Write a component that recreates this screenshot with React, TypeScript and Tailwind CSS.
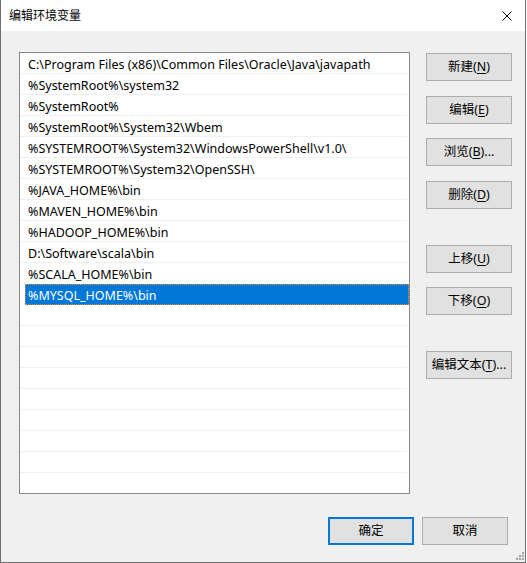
import { ReactNode } from "react";

const paths = [
  "C:\\Program Files (x86)\\Common Files\\Oracle\\Java\\javapath",
  "%SystemRoot%\\system32",
  "%SystemRoot%",
  "%SystemRoot%\\System32\\Wbem",
  "%SYSTEMROOT%\\System32\\WindowsPowerShell\\v1.0\\",
  "%SYSTEMROOT%\\System32\\OpenSSH\\",
  "%JAVA_HOME%\\bin",
  "%MAVEN_HOME%\\bin",
  "%HADOOP_HOME%\\bin",
  "D:\\Software\\scala\\bin",
  "%SCALA_HOME%\\bin",
  "%MYSQL_HOME%\\bin",
];

const selected = 11;
const totalRows = 21;

const font = "font-['Noto_Sans','Noto_Sans_CJK_SC',sans-serif]";

// label with an underlined access key, e.g. 新建(N)
const Key = ({ text, k, tail = "" }: { text: string; k: string; tail?: string }) => (
  <>
    {text}(<span className="underline underline-offset-2">{k}</span>){tail}
  </>
);

const Btn = ({
  children,
  className = "",
  primary = false,
}: {
  children: ReactNode;
  className?: string;
  primary?: boolean;
}) => (
  <button
    className={`w-[86px] h-[28px] bg-[#e1e1e1] text-[12.5px] text-black flex items-center justify-center ${
      primary ? "border-2 border-[#0078d7]" : "border border-[#adadad]"
    } ${className}`}
  >
    {children}
  </button>
);

export default function App() {
  const rows = Array.from({ length: totalRows }, (_, i) => paths[i] ?? "");

  return (
    <div className={`w-[526px] h-[563px] flex flex-col border-l border-r border-b border-[#707070] ${font}`}>
      {/* title bar */}
      <div className="h-[31px] bg-white flex items-center pl-[8px] shrink-0">
        <span className="text-[12px] text-black">编辑环境变量</span>
        <svg className="ml-auto mr-[13px]" width="10" height="10" viewBox="0 0 10 10">
          <path d="M0.5 0.5L9.5 9.5M9.5 0.5L0.5 9.5" stroke="#000" strokeWidth="1" />
        </svg>
      </div>

      <div className="flex-1 bg-[#f0f0f0] flex flex-col relative">
        <div className="flex pt-[21px] pl-[18px]">
          {/* path list */}
          <div className="w-[391px] h-[442px] bg-white border border-[#828790] overflow-hidden">
            {rows.map((p, i) =>
              i === selected ? (
                <div key={i} className="h-[21px] pl-[5px]">
                  <div className="h-[21px] bg-[#0078d7] border border-dotted border-[#ff8728] pl-[2px] text-[12.5px] leading-[21px] text-white whitespace-nowrap">
                    {p}
                  </div>
                </div>
              ) : (
                <div
                  key={i}
                  className={`h-[21px] mr-[2px] pl-[8px] text-[12.5px] leading-[24px] text-black whitespace-nowrap ${
                    i === selected - 1 ? "" : "border-b border-[#f0f0f0]"
                  }`}
                >
                  {p}
                </div>
              )
            )}
          </div>

          {/* action buttons */}
          <div className="ml-[16px] pt-[1px] flex flex-col">
            <Btn><Key text="新建" k="N" /></Btn>
            <Btn className="mt-[15px]"><Key text="编辑" k="E" /></Btn>
            <Btn className="mt-[14px]"><Key text="浏览" k="B" tail="..." /></Btn>
            <Btn className="mt-[15px]"><Key text="删除" k="D" /></Btn>
            <Btn className="mt-[36px]"><Key text="上移" k="U" /></Btn>
            <Btn className="mt-[14px]"><Key text="下移" k="O" /></Btn>
            <Btn className="mt-[36px]"><Key text="编辑文本" k="T" tail="..." /></Btn>
          </div>
        </div>

        {/* dialog buttons */}
        <div className="flex justify-end gap-[8px] mt-[23px] mr-[17px]">
          <Btn primary>确定</Btn>
          <Btn>取消</Btn>
        </div>

        {/* size grip */}
        <div className="absolute right-[1px] bottom-[2px] w-[8px] h-[8px]">
          <svg width="8" height="8" viewBox="0 0 8 8" fill="#a0a0a0">
            <rect x="6" y="0" width="2" height="2" />
            <rect x="3" y="3" width="2" height="2" />
            <rect x="6" y="3" width="2" height="2" />
            <rect x="0" y="6" width="2" height="2" />
            <rect x="3" y="6" width="2" height="2" />
            <rect x="6" y="6" width="2" height="2" />
          </svg>
        </div>
      </div>
    </div>
  );
}
